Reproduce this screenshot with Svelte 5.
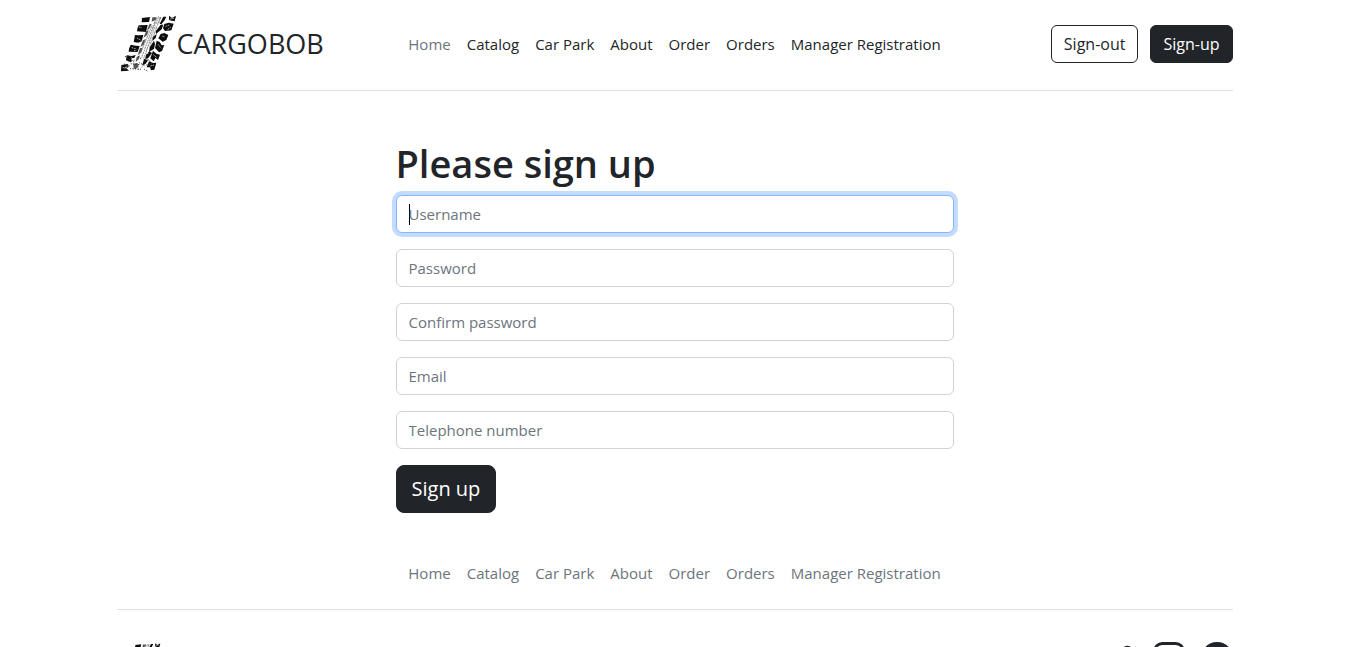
<script>
  const links = ['Home', 'Catalog', 'Car Park', 'About', 'Order', 'Orders', 'Manager Registration'];
  const fields = [
    { id: 'username', label: 'Username', type: 'text' },
    { id: 'password', label: 'Password', type: 'password' },
    { id: 'confirm', label: 'Confirm password', type: 'password' },
    { id: 'email', label: 'Email', type: 'email' },
    { id: 'phone', label: 'Telephone number', type: 'tel' }
  ];
  $effect(() => {
    document.getElementById('username')?.focus();
  });
</script>

{#snippet tread(cls)}
  <svg class={cls} viewBox="21 27 180 180" aria-hidden="true">
    <defs>
      <filter id="{cls}-rough" x="-5%" y="-5%" width="110%" height="110%">
        <feTurbulence type="fractalNoise" baseFrequency="0.12" numOctaves="2" seed="4" />
        <feDisplacementMap in="SourceGraphic" scale="4" xChannelSelector="R" yChannelSelector="G" />
        <feGaussianBlur stdDeviation="1.2" />
      </filter>
    </defs>
    <g filter="url(#{cls}-rough)">
      <path d="M96 39l24-3-3 15-22 1zM86 61l27-1-5 21-27-2 1-8zM75 90l11 1 14-1-5 19-10 4-14-2zM62 119l15 3 12 1-6 18-27-1 1-9zM50 151l15 2 12-3-4 9-8 1-2 12-15-6zM34 180l20-3 2 9-7 4 8 7-24 2z" />
      <path d="M177 32l9 7 12-7-4 17-9-2-8-2zM163 57l13-4 15 3-7 20-19 2-6-8zM152 87l11-3 12 6-6 15-11 5-13-10zM140 107l9 4 6 10 8-1-7 18-9 4-12-13zM129 137l10 9 11 3-6 16-8-6-5 10-10-9zM117 169l12 5 10-1-6 21-10 2-3-9-10 0z" />
      <path d="M160 35l9 0-5 11-10 12-5-2zM152 59l8 0-5 14-17 14-1-8zM140 87l-3 12-10 9 2-13zM132 107l3 10-3 15-15 8 2-13zM118 139l8 5-11 15-9 4 2-14zM102 161l12 5-7 10-10 5z" />
      <path class="inner" d="M127 37l13 0-3 8-12 5zM119 56l6 1-6 13-9 7zM108 79l8-3-5 15-11 8zM99 106l8-4-6 17-10 7zM90 129l8 0-5 14-10 8zM80 156l10-5-4 12-9 8zM70 177l12-4 4 12-10 8-5-3z" />
      <path class="groove" d="M146 34L101 160M135 49L95 157M140 40L107 145M126 62L91 145M151 36L119 124M153 36L146 54" />
      <path class="grit" d="M45 155l10-2M56 169l23-5M62 176l26 3M60 191l35 2M87 173l19 9M94 187l11-12M109 180l20-6M50 160l22 11M103 193l9 5M84 154l12 9M107 158l16 13M42 177l19 7" />
      <path class="wear" d="M87 66l8 2M81 99l10 6M65 128l12 3M72 137l8-2M167 64l11-4M173 73l9-6M157 93l8 3M144 118l10 12M130 149l10 8M121 183l11-3M38 188l13-1M180 42l12-2M62 156l9 8M43 192l9-8" />
      <path class="wear" d="M142 42L103 151M119 79l14 8M108 111l15 9M98 138l18 9M128 57l15 8" />
    </g>
  </svg>
{/snippet}

<div class="container">
  <header>
    <a class="brand" href="#home">{@render tread('logo')}<span>CARGOBOB</span></a>
    <nav aria-label="Main">
      {#each links as link, i}
        <a href="#{link}" class:muted={i === 0}>{link}</a>
      {/each}
    </nav>
    <div class="actions">
      <button type="button" class="btn outline">Sign-out</button>
      <button type="button" class="btn">Sign-up</button>
    </div>
  </header>

  <main>
    <form onsubmit={(e) => e.preventDefault()}>
      <h1>Please sign up</h1>
      {#each fields as f}
        <input id={f.id} type={f.type} placeholder={f.label} aria-label={f.label} />
      {/each}
      <button class="btn large">Sign up</button>
    </form>
  </main>

  <footer>
    <nav aria-label="Footer" class="footer-nav">
      {#each links as link}
        <a href="#{link}" class="muted">{link}</a>
      {/each}
    </nav>
    <div class="bottom">
      <a href="#home" aria-label="Cargobob">{@render tread('small-logo')}</a>
      <div class="social">
        <a href="#twitter" aria-label="Twitter">
          <svg viewBox="0 0 16 16"><path d="M5.026 15c6.038 0 9.341-5.003 9.341-9.334 0-.14 0-.282-.006-.422A6.685 6.685 0 0 0 16 3.542a6.658 6.658 0 0 1-1.889.518 3.301 3.301 0 0 0 1.447-1.817 6.533 6.533 0 0 1-2.087.793A3.286 3.286 0 0 0 7.875 6.03a9.325 9.325 0 0 1-6.767-3.429 3.289 3.289 0 0 0 1.018 4.382A3.323 3.323 0 0 1 .64 6.575v.045a3.288 3.288 0 0 0 2.632 3.218 3.203 3.203 0 0 1-.865.115 3.23 3.23 0 0 1-.614-.057 3.283 3.283 0 0 0 3.067 2.277A6.588 6.588 0 0 1 .78 13.58a6.32 6.32 0 0 1-.78-.045A9.344 9.344 0 0 0 5.026 15z" /></svg>
        </a>
        <a href="#instagram" aria-label="Instagram">
          <svg viewBox="0 0 16 16"><path fill-rule="evenodd" d="M4.7 0h6.6A4.7 4.7 0 0 1 16 4.7v6.6a4.7 4.7 0 0 1-4.7 4.7H4.7A4.7 4.7 0 0 1 0 11.3V4.7A4.7 4.7 0 0 1 4.7 0zm0 1.45A3.25 3.25 0 0 0 1.45 4.7v6.6a3.25 3.25 0 0 0 3.25 3.25h6.6a3.25 3.25 0 0 0 3.25-3.25V4.7a3.25 3.25 0 0 0-3.25-3.25zM8 3.9a4.1 4.1 0 1 1 0 8.2 4.1 4.1 0 0 1 0-8.2zm0 1.44a2.66 2.66 0 1 0 0 5.32 2.66 2.66 0 0 0 0-5.32z" /><circle cx="12.3" cy="3.7" r="0.96" /></svg>
        </a>
        <a href="#facebook" aria-label="Facebook">
          <svg viewBox="0 0 16 16"><path d="M16 8.049c0-4.446-3.582-8.05-8-8.05C3.58 0 0 3.603 0 8.05c0 4.017 2.926 7.347 6.75 7.951v-5.625H4.72V8.05h2.03V6.275c0-2.017 1.195-3.131 3.022-3.131.876 0 1.791.157 1.791.157v1.98h-1.009c-.993 0-1.303.621-1.303 1.258v1.51h2.218l-.354 2.326H9.25V16c3.824-.604 6.75-3.934 6.75-7.951z" /></svg>
        </a>
      </div>
    </div>
  </footer>
</div>

<style>
  :global(body) {
    margin: 0;
    background: #fff;
    color: #212529;
    font: 15px/24px 'Segoe UI', 'Open Sans', 'Noto Sans', sans-serif;
  }
  .container {
    box-sizing: border-box;
    max-width: 1140px;
    margin: 0 auto;
    padding: 0 12px;
  }
  a {
    color: inherit;
    text-decoration: none;
  }
  svg {
    display: block;
    fill: currentColor;
  }
  header {
    display: grid;
    grid-template-columns: 1fr auto 1fr;
    align-items: center;
    padding: 14px 0 16px;
    border-bottom: 1px solid #dee2e6;
  }
  .brand {
    display: flex;
    align-items: center;
    font-size: 27px;
  }
  .logo {
    width: 60px;
    height: 60px;
    color: #0b0b0b;
  }
  .small-logo {
    width: 44px;
    height: 44px;
    color: #0b0b0b;
  }
  .inner {
    fill: #555;
  }
  .groove {
    fill: none;
    stroke: #555;
    stroke-width: 2;
    stroke-dasharray: 9 2 4 1;
  }
  .grit {
    fill: none;
    stroke: #333;
    stroke-width: 3;
    stroke-dasharray: 3 4 5 3;
  }
  .wear {
    fill: none;
    stroke: #fff;
    stroke-width: 2;
    stroke-dasharray: 5 2;
  }
  nav {
    display: flex;
    justify-content: center;
  }
  nav a {
    padding: 8px;
  }
  .muted {
    color: #6c757d;
  }
  .actions {
    display: flex;
    justify-content: flex-end;
    gap: 12px;
  }
  .btn {
    padding: 6px 12px;
    border: 1px solid #212529;
    border-radius: 6px;
    background: #212529;
    color: #fff;
    font: inherit;
    font-size: 16px;
    cursor: pointer;
  }
  .outline {
    background: #fff;
    color: #212529;
  }
  .large {
    padding: 8px 15px;
    border-radius: 8px;
    font-size: 20px;
    line-height: 30px;
  }
  form {
    width: 50%;
    margin: 48px auto 40px;
  }
  h1 {
    margin: 0 0 8px;
    font-size: 38px;
    line-height: 48px;
    font-weight: 600;
  }
  input {
    display: block;
    box-sizing: border-box;
    width: 100%;
    height: 38px;
    margin-bottom: 16px;
    padding: 6px 12px;
    border: 1px solid #ced4da;
    border-radius: 6px;
    background: #fff;
    color: #212529;
    font: inherit;
  }
  input::placeholder {
    color: #6c757d;
    opacity: 1;
  }
  input:focus {
    border-color: #86b7fe;
    outline: 0;
    box-shadow: 0 0 0 4px #c2dbfe;
  }
  input:focus:placeholder-shown {
    background: linear-gradient(#000, #000) 12px 8px / 1px 21px no-repeat #fff;
  }
  .footer-nav {
    padding-bottom: 16px;
    border-bottom: 1px solid #dee2e6;
  }
  .bottom {
    display: flex;
    justify-content: space-between;
    align-items: flex-start;
    padding: 32px 0;
  }
  .social {
    display: flex;
    gap: 16px;
  }
  .social svg {
    width: 32px;
    height: 32px;
  }
</style>
